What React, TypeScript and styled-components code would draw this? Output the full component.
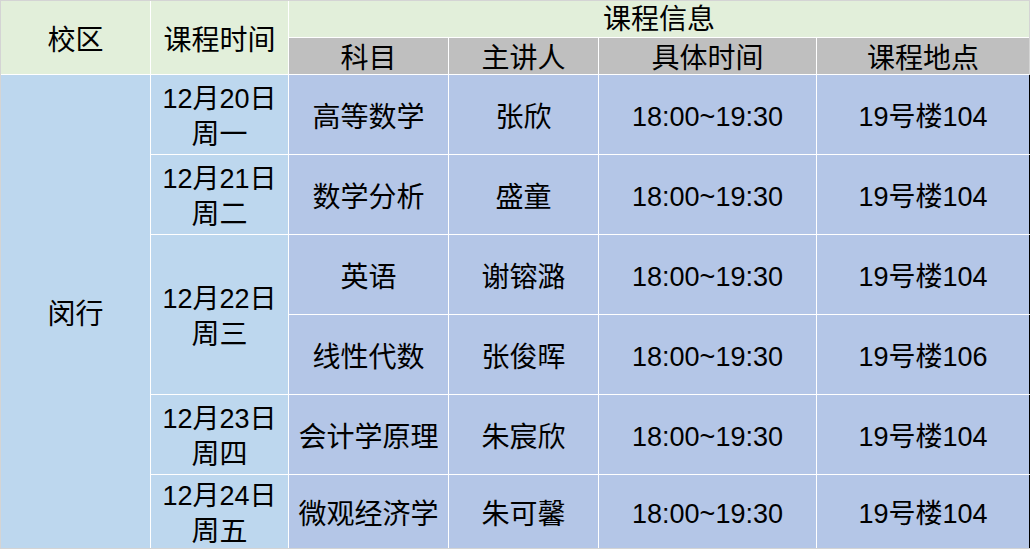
import React from 'react';
import styled, { createGlobalStyle, css } from 'styled-components';

const GlobalStyle = createGlobalStyle`
  html, body {
    margin: 0;
    padding: 0;
    background: #ffffff;
  }
  body {
    font-family: 'Liberation Sans', 'Noto Sans CJK SC', sans-serif;
  }
`;

type Tone = 'head' | 'sub' | 'side' | 'body';

const toneColors: Record<Tone, string> = {
  head: '#e2efda',
  sub: '#bfbfbf',
  side: '#bdd7ee',
  body: '#b4c6e7',
};

const Sheet = styled.div`
  display: grid;
  grid-template-columns: 149px 137px 159px 149px 217px 212px;
  grid-template-rows: 36px 36px 79px 79px 79px 79px 79px 73px;
  gap: 1px;
  width: 1030px;
  height: 549px;
  box-sizing: border-box;
  background: #ffffff;
  border: 1px solid #d4d4d4;
`;

const Cell = styled.div<{ $tone: Tone; $rows?: number; $cols?: number; $edge?: boolean }>`
  display: flex;
  flex-direction: column;
  align-items: center;
  justify-content: center;
  box-sizing: border-box;
  padding-top: 5px;
  overflow: visible;
  background: ${(p) => toneColors[p.$tone]};
  color: #000000;
  font-size: 27px;
  line-height: 35px;
  text-align: center;
  white-space: nowrap;
  ${(p) => p.$rows && css`grid-row: span ${p.$rows};`}
  ${(p) => p.$cols && css`grid-column: span ${p.$cols};`}
  ${(p) => p.$edge && css`box-shadow: 1px 0 0 #000000;`}
`;

const HeadTitle = styled.span`
  line-height: 30px;
  margin-top: -3px;
`;

const Han = styled.span`
  font-size: 28px;
`;

type Lesson = {
  subject: string;
  teacher: string;
  time: string;
  place: string;
};

type Day = {
  date: string;
  week: string;
  lessons: Lesson[];
};

const days: Day[] = [
  { date: '12月20日', week: '周一', lessons: [{ subject: '高等数学', teacher: '张欣', time: '18:00~19:30', place: '19号楼104' }] },
  { date: '12月21日', week: '周二', lessons: [{ subject: '数学分析', teacher: '盛童', time: '18:00~19:30', place: '19号楼104' }] },
  {
    date: '12月22日',
    week: '周三',
    lessons: [
      { subject: '英语', teacher: '谢镕潞', time: '18:00~19:30', place: '19号楼104' },
      { subject: '线性代数', teacher: '张俊晖', time: '18:00~19:30', place: '19号楼106' },
    ],
  },
  { date: '12月23日', week: '周四', lessons: [{ subject: '会计学原理', teacher: '朱宸欣', time: '18:00~19:30', place: '19号楼104' }] },
  { date: '12月24日', week: '周五', lessons: [{ subject: '微观经济学', teacher: '朱可馨', time: '18:00~19:30', place: '19号楼104' }] },
];

const totalLessons = days.reduce((n, d) => n + d.lessons.length, 0);

const App: React.FC = () => {
  return (
    <>
      <GlobalStyle />
      <Sheet>
        <Cell $tone="head" $rows={2}><Han>校区</Han></Cell>
        <Cell $tone="head" $rows={2}><Han>课程时间</Han></Cell>
        <Cell $tone="head" $cols={4}>
          <HeadTitle><Han>课程信息</Han></HeadTitle>
        </Cell>
        <Cell $tone="sub"><Han>科目</Han></Cell>
        <Cell $tone="sub"><Han>主讲人</Han></Cell>
        <Cell $tone="sub"><Han>具体时间</Han></Cell>
        <Cell $tone="sub"><Han>课程地点</Han></Cell>

        <Cell $tone="side" $rows={totalLessons}><Han>闵行</Han></Cell>
        {days.map((day) => (
          <React.Fragment key={day.date}>
            <Cell $tone="side" $rows={day.lessons.length}>
              <span>{day.date}</span>
              <Han>{day.week}</Han>
            </Cell>
            {day.lessons.map((l) => (
              <React.Fragment key={l.subject}>
                <Cell $tone="body"><Han>{l.subject}</Han></Cell>
                <Cell $tone="body"><Han>{l.teacher}</Han></Cell>
                <Cell $tone="body">{l.time}</Cell>
                <Cell $tone="body" $edge>{l.place}</Cell>
              </React.Fragment>
            ))}
          </React.Fragment>
        ))}
      </Sheet>
    </>
  );
};

export default App;
